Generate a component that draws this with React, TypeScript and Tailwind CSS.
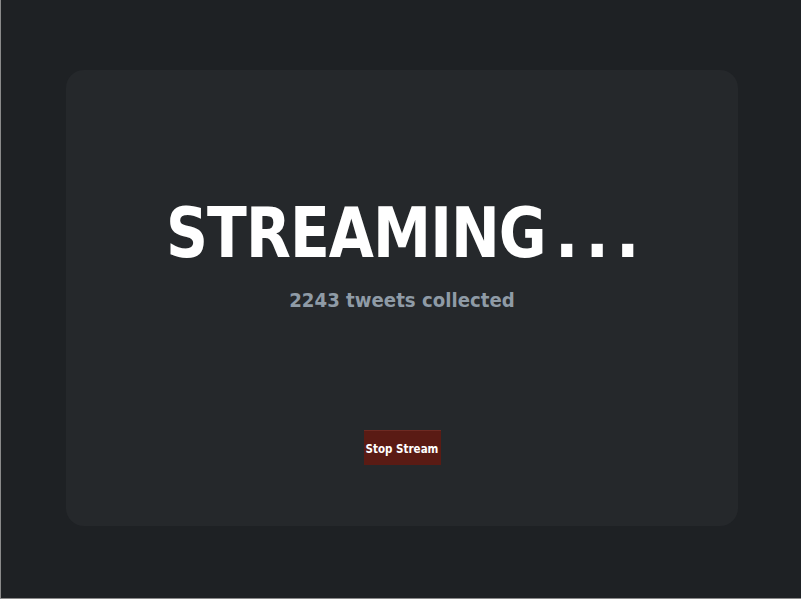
import React from "react";

export default function App() {
  return (
    <div className="w-[801px] h-[599px] bg-[#1e2124] border-l border-b border-[#8a8a8a] flex items-center justify-center font-stretch-condensed" style={{ fontFamily: '"DejaVu Sans", sans-serif' }}>
      <div className="w-[672px] h-[456px] mt-[-2px] ml-[2px] rounded-[18px] bg-[#25282b] flex flex-col items-center">
        <div className="mt-[128px] pl-[8px] text-white font-bold text-[70px] leading-none flex items-baseline whitespace-nowrap">
          <span className="w-[377px] inline-block">
            <span className="inline-block origin-left scale-x-[0.926] tracking-[-1px]">STREAMING</span>
          </span>
          <span className="ml-[12px] tracking-[6.5px]">...</span>
        </div>
        <div className="mt-[22px] text-[#8f9ba6] font-bold text-[20.2px] leading-none">2243 tweets collected</div>
        <button className="mt-[120px] w-[77px] h-[35px] pt-[3px] bg-[#5a1b14] border-t border-[#6e2a22] text-white font-bold text-[11.5px] whitespace-nowrap">Stop Stream</button>
      </div>
    </div>
  );
}
